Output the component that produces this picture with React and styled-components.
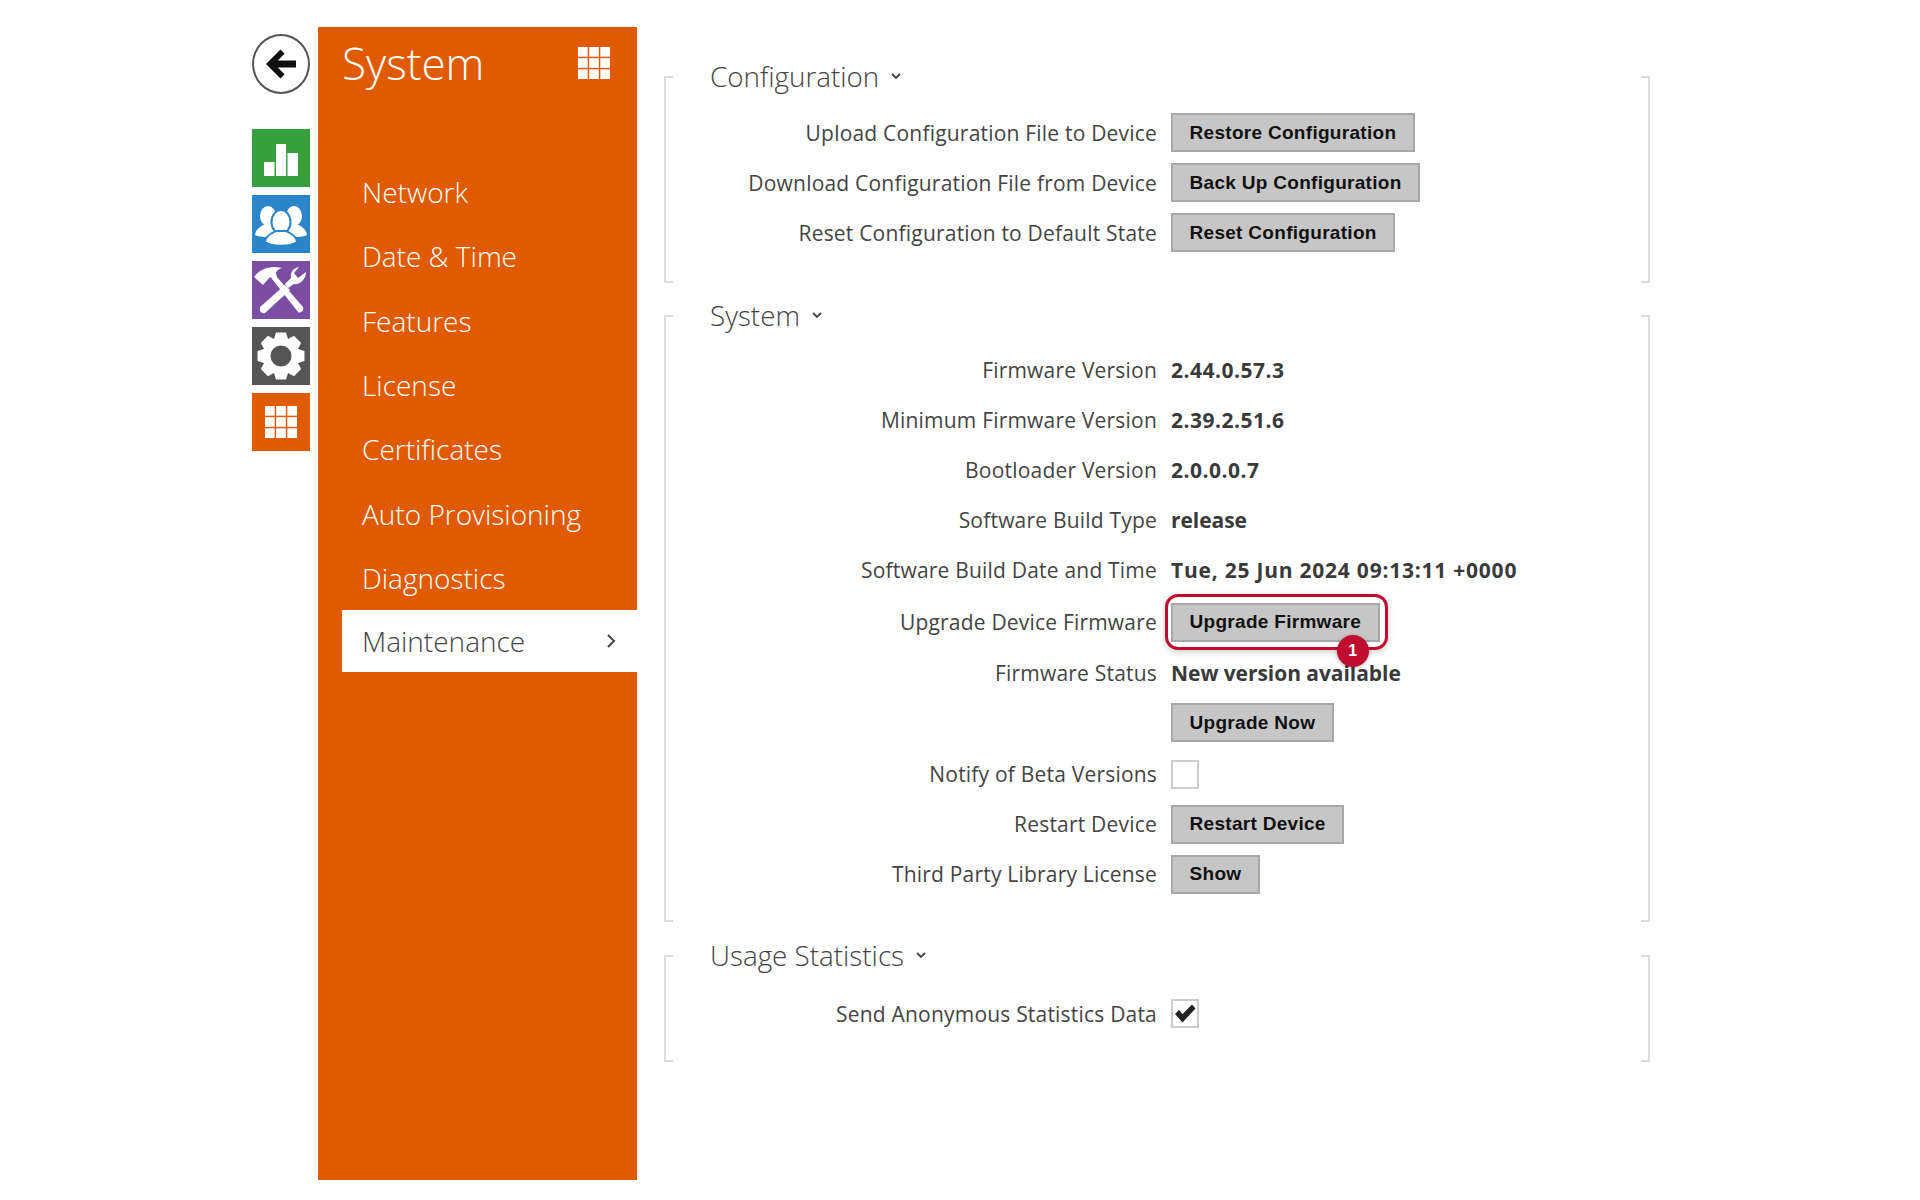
import React from 'react';
import styled, { createGlobalStyle } from 'styled-components';

const GlobalStyle = createGlobalStyle`
  html, body {
    margin: 0;
    padding: 0;
    background: #fff;
    font-family: "Open Sans", "Noto Sans", sans-serif;
    color: #444;
  }
`;

const Page = styled.div`
  display: flex;
  align-items: flex-start;
  width: 1920px;
  height: 1200px;
  padding: 27px 0 0 252px;
  box-sizing: border-box;
  overflow: hidden;
`;

const Rail = styled.div`
  display: flex;
  flex-direction: column;
  width: 58px;
  margin-right: 8px;
`;

const BackButton = styled.div`
  display: flex;
  align-items: center;
  justify-content: center;
  width: 58px;
  height: 60px;
  margin: 7px 0 35px;
  border: 2px solid #555;
  border-radius: 50%;
  box-sizing: border-box;
`;

const Tile = styled.div`
  display: flex;
  align-items: center;
  justify-content: center;
  width: 58px;
  height: 58px;
  margin-bottom: 8px;
  background: ${(p) => p.$color};
  color: #fff;
`;

const Sidebar = styled.aside`
  width: 319px;
  height: 1153px;
  background: #e05a00;
  color: #fff;
  flex-shrink: 0;
`;

const SideHeader = styled.div`
  display: flex;
  justify-content: space-between;
  align-items: flex-start;
  height: 133px;
  padding: 0 27px 0 24px;
  box-sizing: border-box;
`;

const SideTitle = styled.div`
  font-size: 44px;
  font-weight: 300;
  line-height: 60px;
  margin-top: 6px;
`;

const GridWrap = styled.div`
  margin-top: 20px;
  display: flex;
`;

const NavList = styled.nav`
  display: flex;
  flex-direction: column;
  padding-left: 24px;
`;

const NavItem = styled.div`
  display: flex;
  align-items: center;
  justify-content: space-between;
  height: ${(p) => (p.$active ? '61.5px' : '64.3px')};
  padding: 0 21px 0 20px;
  font-size: 28px;
  font-weight: 300;
  background: ${(p) => (p.$active ? '#fff' : 'transparent')};
  color: ${(p) => (p.$active ? '#444' : '#fff')};
`;

const Main = styled.main`
  width: 986px;
  margin-left: 27px;
  flex-shrink: 0;
`;

const Section = styled.section`
  display: flow-root;
  box-sizing: border-box;
  width: 986px;
  height: ${(p) => p.$height}px;
  margin-top: ${(p) => p.$top}px;
  border-left: 2px solid #dcdcdc;
  border-right: 2px solid #dcdcdc;
  background:
    linear-gradient(#dcdcdc, #dcdcdc) left top / 7px 2px no-repeat,
    linear-gradient(#dcdcdc, #dcdcdc) right top / 7px 2px no-repeat,
    linear-gradient(#dcdcdc, #dcdcdc) left bottom / 7px 2px no-repeat,
    linear-gradient(#dcdcdc, #dcdcdc) right bottom / 7px 2px no-repeat;
`;

const Heading = styled.h2`
  display: flex;
  align-items: center;
  gap: 12px;
  height: 40px;
  margin: -20px 0 ${(p) => p.$after}px 44px;
  font-size: 27.8px;
  font-weight: 300;
  color: #444;
`;

const Row = styled.div`
  display: grid;
  grid-template-columns: 491px auto;
  column-gap: 14px;
  align-items: center;
  height: ${(p) => p.$height || 50.1}px;
`;

const Label = styled.div`
  text-align: right;
  font-size: 21px;
  letter-spacing: 0.2px;
  color: #444;
`;

const Value = styled.div`
  font-size: 21px;
  font-weight: 700;
  color: #3a3a3a;
  letter-spacing: ${(p) => p.$tracking ?? -0.05}px;
`;

const Button = styled.div`
  display: inline-flex;
  align-items: center;
  height: 39px;
  padding: 0 16.5px;
  background: #c6c6c6;
  border: 2px solid #a8a8a8;
  box-sizing: border-box;
  font-family: "Liberation Sans", Arial, sans-serif;
  font-weight: 700;
  font-size: 19px;
  letter-spacing: 0.3px;
  color: #111;
  white-space: nowrap;
`;

const Highlight = styled.div`
  position: relative;
  justify-self: start;
  display: flex;
  &::after {
    content: '';
    position: absolute;
    inset: -9px -8px -8px -6px;
    border: 3px solid #c00d2f;
    border-radius: 13px;
    box-shadow: 0 2px 6px rgba(0, 0, 0, 0.2);
  }
`;

const Badge = styled.span`
  position: absolute;
  z-index: 1;
  right: 11px;
  bottom: -25px;
  display: flex;
  align-items: center;
  justify-content: center;
  width: 32px;
  height: 32px;
  border-radius: 50%;
  background: #c00d2f;
  color: #fff;
  font-family: "Liberation Sans", Arial, sans-serif;
  font-weight: 700;
  font-size: 16px;
  box-shadow: 0 1px 4px rgba(0, 0, 0, 0.3);
`;

const Checkbox = styled.div`
  display: flex;
  align-items: center;
  justify-content: center;
  width: 28px;
  height: 29px;
  border: 2px solid #cdcdcd;
  box-sizing: border-box;
  background: #fff;
`;

const Grid3 = ({ size }) => {
  const cell = (size - 3) / 3;
  const cells = [];
  for (let r = 0; r < 3; r++) {
    for (let c = 0; c < 3; c++) {
      cells.push(<rect key={`${r}${c}`} x={c * (cell + 1.5)} y={r * (cell + 1.5)} width={cell} height={cell} fill="#fff" />);
    }
  }
  return <svg width={size} height={size} viewBox={`0 0 ${size} ${size}`}>{cells}</svg>;
};

const BackArrow = () => (
  <svg width="30" height="30" viewBox="0 0 29 29">
    <path d="M0 14.5 L14 0.5 L18 4.5 L11.5 11 H29 V18 H11.5 L18 24.5 L14 28.5 Z" fill="#111" />
  </svg>
);

const BarsIcon = () => (
  <svg width="58" height="58" viewBox="0 0 58 58">
    <rect x="12" y="33" width="10.5" height="14" fill="#fff" />
    <rect x="24" y="15" width="10" height="32" fill="#fff" />
    <rect x="35.5" y="24" width="10.5" height="23" fill="#fff" />
  </svg>
);

const UsersIcon = () => (
  <svg width="58" height="58" viewBox="0 0 58 58">
    <g fill="#fff">
      <ellipse cx="16" cy="21" rx="8" ry="10" />
      <path d="M3 40 C4 33 10 31 13 29 L20 29 C24 31 28 34 28 38 L20 42 C12 42 7 42 3 40 Z" />
      <ellipse cx="42" cy="21" rx="8" ry="10" />
      <path d="M55 40 C54 33 48 31 45 29 L38 29 C34 31 30 34 30 38 L38 42 C46 42 51 42 55 40 Z" />
    </g>
    <g fill="#fff" stroke="#2a86c8" strokeWidth="2">
      <ellipse cx="29" cy="27" rx="9.5" ry="12" />
      <path d="M13 47 C13 41 20 38 24 36 L34 36 C38 38 45 41 45 47 C38 52 20 52 13 47 Z" />
    </g>
  </svg>
);

const ToolsIcon = () => (
  <svg width="58" height="58" viewBox="0 0 58 58">
    <g fill="#fff">
      <path d="M8 46 L33 24 L38 29 L13 52 Q10 53 8 50 Z" />
      <path d="M2 16 C8 8 18 4 30 7 C24 9 23 12 25 15 L22 19 L18 16 L11 24 Z" />
      <path d="M20 18 L24 15 L51 46 Q52 50 49 51 Q47 52 46 51 Z" />
      <path d="M36 27 L33 23 L39 17 C38 12 41 7 47 6 L42 12 L46 17 L54 11 C54 19 47 24 42 23 Z" />
    </g>
  </svg>
);

// eight wide teeth round a hole
const gearPath = () => {
  const pts = [];
  for (let i = 0; i < 8; i++) {
    const a = (i * Math.PI) / 4 - Math.PI / 2;
    const spots = [[-0.39, 18.5], [-0.21, 24], [0.21, 24], [0.39, 18.5]];
    spots.forEach(([da, r]) => {
      pts.push(`${(29 + r * Math.cos(a + da)).toFixed(2)} ${(29 + r * Math.sin(a + da)).toFixed(2)}`);
    });
  }
  return `M${pts.join(' L')} Z M39.5 29 A10.5 10.5 0 1 0 18.5 29 A10.5 10.5 0 1 0 39.5 29 Z`;
};

const GearIcon = () => (
  <svg width="58" height="58" viewBox="0 0 58 58">
    <path d={gearPath()} fill="#fff" fillRule="evenodd" />
  </svg>
);

const Chevron = () => (
  <svg width="10" height="8" viewBox="0 0 10 8">
    <path d="M1 2 L5 6 L9 2" fill="none" stroke="#444" strokeWidth="1.8" />
  </svg>
);

const ChevronRight = () => (
  <svg width="10" height="16" viewBox="0 0 10 16">
    <path d="M2 2 L8 8 L2 14" fill="none" stroke="#444" strokeWidth="2" />
  </svg>
);

const Check = () => (
  <svg width="22" height="20" viewBox="0 0 22 20">
    <path d="M1 10 L5 6 L8.5 10 L18 0.5 L21.5 4.5 L8.5 18.5 Z" fill="#222" />
  </svg>
);

const navItems = ['Network', 'Date & Time', 'Features', 'License', 'Certificates', 'Auto Provisioning', 'Diagnostics'];

const App = () => (
  <>
    <GlobalStyle />
    <Page>
      <Rail>
        <BackButton><BackArrow /></BackButton>
        <Tile $color="#36a03c"><BarsIcon /></Tile>
        <Tile $color="#2a86c8"><UsersIcon /></Tile>
        <Tile $color="#7c4ea3"><ToolsIcon /></Tile>
        <Tile $color="#555"><GearIcon /></Tile>
        <Tile $color="#e05a00"><Grid3 size={32} /></Tile>
      </Rail>
      <Sidebar>
        <SideHeader>
          <SideTitle>System</SideTitle>
          <GridWrap><Grid3 size={32} /></GridWrap>
        </SideHeader>
        <NavList>
          {navItems.map((item) => <NavItem key={item}>{item}</NavItem>)}
          <NavItem $active>Maintenance<ChevronRight /></NavItem>
        </NavList>
      </Sidebar>
      <Main>
        <Section $height={207} $top={49}>
          <Heading $after={11.5}>Configuration <Chevron /></Heading>
          <Row>
            <Label>Upload Configuration File to Device</Label>
            <div><Button>Restore Configuration</Button></div>
          </Row>
          <Row>
            <Label>Download Configuration File from Device</Label>
            <div><Button>Back Up Configuration</Button></div>
          </Row>
          <Row>
            <Label>Reset Configuration to Default State</Label>
            <div><Button>Reset Configuration</Button></div>
          </Row>
        </Section>
        <Section $height={606.5} $top={32}>
          <Heading $after={10}>System <Chevron /></Heading>
          <Row>
            <Label>Firmware Version</Label>
            <Value $tracking={0.5}>2.44.0.57.3</Value>
          </Row>
          <Row>
            <Label>Minimum Firmware Version</Label>
            <Value $tracking={0.5}>2.39.2.51.6</Value>
          </Row>
          <Row>
            <Label>Bootloader Version</Label>
            <Value $tracking={0.5}>2.0.0.0.7</Value>
          </Row>
          <Row>
            <Label>Software Build Type</Label>
            <Value>release</Value>
          </Row>
          <Row>
            <Label>Software Build Date and Time</Label>
            <Value $tracking={0.77}>Tue, 25 Jun 2024 09:13:11 +0000</Value>
          </Row>
          <Row $height={53.5}>
            <Label>Upgrade Device Firmware</Label>
            <Highlight>
              <Button>Upgrade Firmware</Button>
              <Badge>1</Badge>
            </Highlight>
          </Row>
          <Row $height={47.5}>
            <Label>Firmware Status</Label>
            <Value>New version available</Value>
          </Row>
          <Row $height={52.5}>
            <span />
            <div><Button>Upgrade Now</Button></div>
          </Row>
          <Row>
            <Label>Notify of Beta Versions</Label>
            <Checkbox />
          </Row>
          <Row>
            <Label>Restart Device</Label>
            <div><Button>Restart Device</Button></div>
          </Row>
          <Row>
            <Label>Third Party Library License</Label>
            <div><Button>Show</Button></div>
          </Row>
        </Section>
        <Section $height={107} $top={33}>
          <Heading $after={9}>Usage Statistics <Chevron /></Heading>
          <Row $height={60}>
            <Label>Send Anonymous Statistics Data</Label>
            <Checkbox><Check /></Checkbox>
          </Row>
        </Section>
      </Main>
    </Page>
  </>
);

export default App;
